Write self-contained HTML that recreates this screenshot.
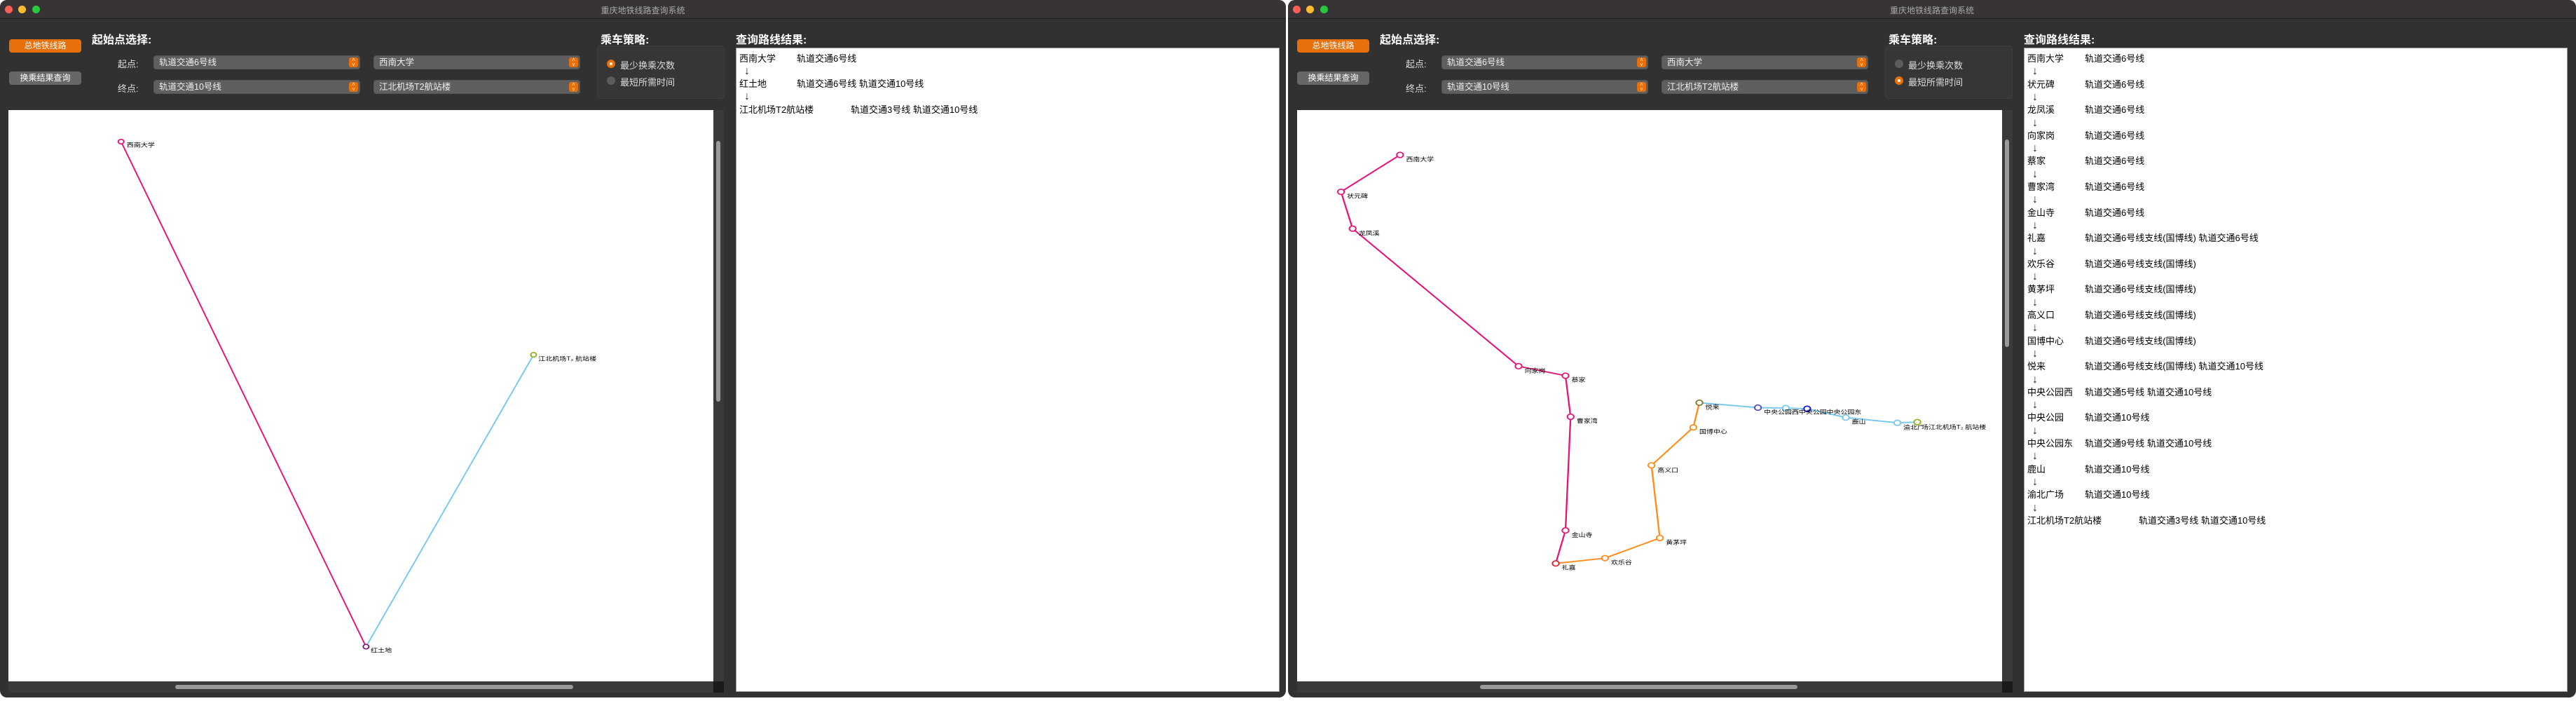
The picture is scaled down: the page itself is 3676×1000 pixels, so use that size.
<!DOCTYPE html>
<html><head><meta charset="utf-8"><style>
*{margin:0;padding:0;box-sizing:border-box}
body{width:3676px;height:1000px;background:#fff;position:relative;overflow:hidden;font-family:"Liberation Sans","Noto Sans CJK SC",sans-serif}
.win{position:absolute;top:0;height:995px;background:#313131;border-radius:10px;overflow:hidden}
.tb{position:absolute;left:0;right:0;top:0;height:27px;background:#383435;border-bottom:1px solid #1c1c1c}
.tt{position:absolute;left:0;right:0;top:6px;text-align:center;color:#aaa;font-size:12px}
.tl{position:absolute;top:8px;width:11px;height:11px;border-radius:50%}
.a{position:absolute;white-space:nowrap}
.btn{position:absolute;left:13px;width:103px;height:19px;border-radius:4px;color:#fff;font-size:12px;text-align:center;line-height:19px}
.h{color:#fff;font-weight:bold;font-size:16px}
.lbl{color:#ddd;font-size:13px}
.cb{position:absolute;height:20px;background:#5f5f5f;border:1px solid #555;border-radius:4px;color:#eee;font-size:12.5px;line-height:18px;padding-left:7px}
.st{position:absolute;right:2px;top:2px;width:13px;height:14px;background:#e8700a;border-radius:3px;color:#fff;font-size:8px;line-height:7px;text-align:center}
.grp{position:absolute;left:852px;top:65px;width:182px;height:76px;background:#363636;border:1px solid #3f3f3f;border-radius:5px}
.rd{position:absolute;width:12px;height:12px;border-radius:50%}
.on{background:#e8700a}.on::after{content:"";position:absolute;left:4px;top:4px;width:4px;height:4px;border-radius:50%;background:#fff}
.off{background:#5c5c5c}
.rt{color:#ddd;font-size:13px}
.canvas{position:absolute;left:12px;top:157px;width:1006px;height:815px;background:#fff}
.vs{position:absolute;left:1018px;top:157px;width:15px;height:815px;background:#3a3a3a}
.vt{position:absolute;left:4px;width:6px;border-radius:3px;background:#9a9a9a}
.hs{position:absolute;left:12px;top:972px;width:1006px;height:16px;background:#3a3a3a}
.ht{position:absolute;top:5px;height:6px;border-radius:3px;background:#9a9a9a}
.cor{position:absolute;left:1018px;top:972px;width:15px;height:16px;background:#1a1a1a}
.res{position:absolute;left:1050px;top:68px;width:776px;height:919px;background:#fff;border:1px solid #999}
.r{position:absolute;left:4px;font-size:13px;color:#000;height:18.3px;line-height:18.3px;white-space:nowrap}
.r b{font-weight:normal;position:absolute;left:82px}
.r i{font-style:normal;position:absolute;left:159px}
.ar{position:absolute;left:11px;font-size:16px;color:#222;line-height:18.3px}
svg{position:absolute;top:150px;height:850px}
svg text{font-family:"Liberation Sans","Noto Sans CJK SC",sans-serif;font-size:15px;fill:#000}
</style></head><body>

<!-- LEFT WINDOW -->
<div class="win" style="left:0;width:1835px">
<div class="tb"><div class="tt">重庆地铁线路查询系统</div>
<div class="tl" style="left:7px;background:#fe5f57"></div><div class="tl" style="left:26px;background:#febc2e"></div><div class="tl" style="left:46px;background:#28c840"></div></div>
<div class="btn" style="top:56px;background:#e8700a">总地铁线路</div>
<div class="btn" style="top:102px;background:#676767">换乘结果查询</div>
<div class="a h" style="left:131px;top:43px">起始点选择:</div>
<div class="a lbl" style="left:168px;top:81px">起点:</div>
<div class="a lbl" style="left:168px;top:116px">终点:</div>
<div class="cb" style="left:219px;top:79px;width:295px">轨道交通6号线<div class="st">˄<br>˅</div></div>
<div class="cb" style="left:533px;top:79px;width:295px">西南大学<div class="st">˄<br>˅</div></div>
<div class="cb" style="left:219px;top:114px;width:295px">轨道交通10号线<div class="st">˄<br>˅</div></div>
<div class="cb" style="left:533px;top:114px;width:295px">江北机场T2航站楼<div class="st">˄<br>˅</div></div>
<div class="a h" style="left:857px;top:43px">乘车策略:</div>
<div class="grp"></div>
<div class="rd on" style="left:866px;top:85px"></div><div class="a rt" style="left:885px;top:83px">最少换乘次数</div>
<div class="rd off" style="left:866px;top:109px"></div><div class="a rt" style="left:885px;top:107px">最短所需时间</div>
<div class="a h" style="left:1050px;top:43px">查询路线结果:</div>
<div class="canvas"></div>
<div class="vs"><div class="vt" style="top:44px;height:372px"></div></div>
<div class="hs"><div class="ht" style="left:238px;width:568px"></div></div>
<div class="cor"></div>
<svg viewBox="0 0 1568 1568" preserveAspectRatio="none" style="left:0;width:1050px">
<polyline points="258,96 780,1425" fill="none" stroke="#e4147a" stroke-width="3"/>
<polyline points="780,1425 1137,657" fill="none" stroke="#78c8ee" stroke-width="3"/>
<circle cx="258" cy="96" r="6" fill="#fff" stroke="#e4147a" stroke-width="3"/>
<circle cx="780" cy="1425" r="6" fill="#fff" stroke="#7a1a7a" stroke-width="3"/>
<circle cx="1137" cy="657" r="6" fill="#fff" stroke="#8db020" stroke-width="3"/>
<text x="270" y="110">西南大学</text>
<text x="790" y="1440">红土地</text>
<text x="1147" y="672">江北机场T₂ 航站楼</text>
</svg>
<div class="res">
<div class="r" style="top:6px">西南大学<b>轨道交通6号线</b></div>
<div class="ar" style="top:24px">↓</div>
<div class="r" style="top:42px">红土地<b>轨道交通6号线 轨道交通10号线</b></div>
<div class="ar" style="top:60px">↓</div>
<div class="r" style="top:79px">江北机场T2航站楼<i>轨道交通3号线 轨道交通10号线</i></div>
</div>
</div>

<!-- RIGHT WINDOW -->
<div class="win" style="left:1838px;width:1838px">
<div class="tb"><div class="tt">重庆地铁线路查询系统</div>
<div class="tl" style="left:7px;background:#fe5f57"></div><div class="tl" style="left:26px;background:#febc2e"></div><div class="tl" style="left:46px;background:#28c840"></div></div>
<div class="btn" style="top:56px;background:#e8700a">总地铁线路</div>
<div class="btn" style="top:102px;background:#676767">换乘结果查询</div>
<div class="a h" style="left:131px;top:43px">起始点选择:</div>
<div class="a lbl" style="left:168px;top:81px">起点:</div>
<div class="a lbl" style="left:168px;top:116px">终点:</div>
<div class="cb" style="left:219px;top:79px;width:295px">轨道交通6号线<div class="st">˄<br>˅</div></div>
<div class="cb" style="left:533px;top:79px;width:295px">西南大学<div class="st">˄<br>˅</div></div>
<div class="cb" style="left:219px;top:114px;width:295px">轨道交通10号线<div class="st">˄<br>˅</div></div>
<div class="cb" style="left:533px;top:114px;width:295px">江北机场T2航站楼<div class="st">˄<br>˅</div></div>
<div class="a h" style="left:857px;top:43px">乘车策略:</div>
<div class="grp"></div>
<div class="rd off" style="left:866px;top:85px"></div><div class="a rt" style="left:885px;top:83px">最少换乘次数</div>
<div class="rd on" style="left:866px;top:109px"></div><div class="a rt" style="left:885px;top:107px">最短所需时间</div>
<div class="a h" style="left:1050px;top:43px">查询路线结果:</div>
<div class="canvas" style="left:13px"></div>
<div class="vs" style="left:1019px"><div class="vt" style="top:42px;height:296px"></div></div>
<div class="hs" style="left:13px"><div class="ht" style="left:261px;width:453px"></div></div>
<div class="cor" style="left:1019px"></div>
<svg viewBox="0 0 1568 1568" preserveAspectRatio="none" style="left:2px;width:1040px">
<polyline points="238,131 111,228 136,325 493,687 594,712 605,820 594,1119 573,1206" fill="none" stroke="#e4147a" stroke-width="3.5"/>
<polyline points="573,1206 679,1192 797,1139 779,948 869,848 882,783" fill="none" stroke="#ff8c1a" stroke-width="3.5"/>
<polyline points="882,783 1008,796 1068,797 1114,799 1197,822 1308,836 1351,834" fill="none" stroke="#78c8ee" stroke-width="3.5"/>
<g fill="#fff" stroke-width="3">
<circle cx="238" cy="131" r="7" stroke="#e4147a"/><circle cx="111" cy="228" r="7" stroke="#e4147a"/><circle cx="136" cy="325" r="7" stroke="#e4147a"/>
<circle cx="493" cy="687" r="7" stroke="#e4147a"/><circle cx="594" cy="712" r="7" stroke="#e4147a"/><circle cx="605" cy="820" r="7" stroke="#e4147a"/>
<circle cx="594" cy="1119" r="7" stroke="#e4147a"/><circle cx="573" cy="1206" r="7" stroke="#e02030"/>
<circle cx="679" cy="1192" r="7" stroke="#ff8c1a"/><circle cx="797" cy="1139" r="7" stroke="#ff8c1a"/><circle cx="779" cy="948" r="7" stroke="#ff8c1a"/><circle cx="869" cy="848" r="7" stroke="#ff8c1a"/>
<circle cx="882" cy="783" r="7" stroke="#8a7a2a"/><circle cx="1008" cy="796" r="7" stroke="#5050c0"/><circle cx="1068" cy="797" r="7" stroke="#78c8ee"/><circle cx="1114" cy="799" r="7" stroke="#1010ee"/>
<circle cx="1197" cy="822" r="7" stroke="#78c8ee"/><circle cx="1308" cy="836" r="7" stroke="#78c8ee"/><circle cx="1351" cy="834" r="7" stroke="#8db020"/>
</g>
<text x="251" y="148">西南大学</text><text x="124" y="244">状元碑</text><text x="149" y="342">龙凤溪</text>
<text x="506" y="704">向家岗</text><text x="607" y="728">蔡家</text><text x="618" y="836">曹家湾</text>
<text x="607" y="1136">金山寺</text><text x="586" y="1222">礼嘉</text><text x="692" y="1208">欢乐谷</text>
<text x="810" y="1156">黄茅坪</text><text x="792" y="966">高义口</text><text x="882" y="864">国博中心</text>
<text x="895" y="800">悦来</text><text x="1021" y="813">中央公园西中央公园中央公园东</text>
<text x="1210" y="838">鹿山</text><text x="1321" y="853">渝北广</text><text x="1360" y="852">场江北机场T₂ 航站楼</text>
</svg>
<div class="res">
<div class="r" style="top:6px">西南大学<b>轨道交通6号线</b></div><div class="ar" style="top:24.3px">↓</div>
<div class="r" style="top:42.6px">状元碑<b>轨道交通6号线</b></div><div class="ar" style="top:60.9px">↓</div>
<div class="r" style="top:79.2px">龙凤溪<b>轨道交通6号线</b></div><div class="ar" style="top:97.5px">↓</div>
<div class="r" style="top:115.8px">向家岗<b>轨道交通6号线</b></div><div class="ar" style="top:134.1px">↓</div>
<div class="r" style="top:152.4px">蔡家<b>轨道交通6号线</b></div><div class="ar" style="top:170.7px">↓</div>
<div class="r" style="top:189px">曹家湾<b>轨道交通6号线</b></div><div class="ar" style="top:207.3px">↓</div>
<div class="r" style="top:225.6px">金山寺<b>轨道交通6号线</b></div><div class="ar" style="top:243.9px">↓</div>
<div class="r" style="top:262.2px">礼嘉<b>轨道交通6号线支线(国博线) 轨道交通6号线</b></div><div class="ar" style="top:280.5px">↓</div>
<div class="r" style="top:298.8px">欢乐谷<b>轨道交通6号线支线(国博线)</b></div><div class="ar" style="top:317.1px">↓</div>
<div class="r" style="top:335.4px">黄茅坪<b>轨道交通6号线支线(国博线)</b></div><div class="ar" style="top:353.7px">↓</div>
<div class="r" style="top:372px">高义口<b>轨道交通6号线支线(国博线)</b></div><div class="ar" style="top:390.3px">↓</div>
<div class="r" style="top:408.6px">国博中心<b>轨道交通6号线支线(国博线)</b></div><div class="ar" style="top:426.9px">↓</div>
<div class="r" style="top:445.2px">悦来<b>轨道交通6号线支线(国博线) 轨道交通10号线</b></div><div class="ar" style="top:463.5px">↓</div>
<div class="r" style="top:481.8px">中央公园西<b>轨道交通5号线 轨道交通10号线</b></div><div class="ar" style="top:500.1px">↓</div>
<div class="r" style="top:518.4px">中央公园<b>轨道交通10号线</b></div><div class="ar" style="top:536.7px">↓</div>
<div class="r" style="top:555px">中央公园东<b>轨道交通9号线 轨道交通10号线</b></div><div class="ar" style="top:573.3px">↓</div>
<div class="r" style="top:591.6px">鹿山<b>轨道交通10号线</b></div><div class="ar" style="top:609.9px">↓</div>
<div class="r" style="top:628.2px">渝北广场<b>轨道交通10号线</b></div><div class="ar" style="top:646.5px">↓</div>
<div class="r" style="top:664.8px">江北机场T2航站楼<i>轨道交通3号线 轨道交通10号线</i></div>
</div>
</div>
</body></html>
